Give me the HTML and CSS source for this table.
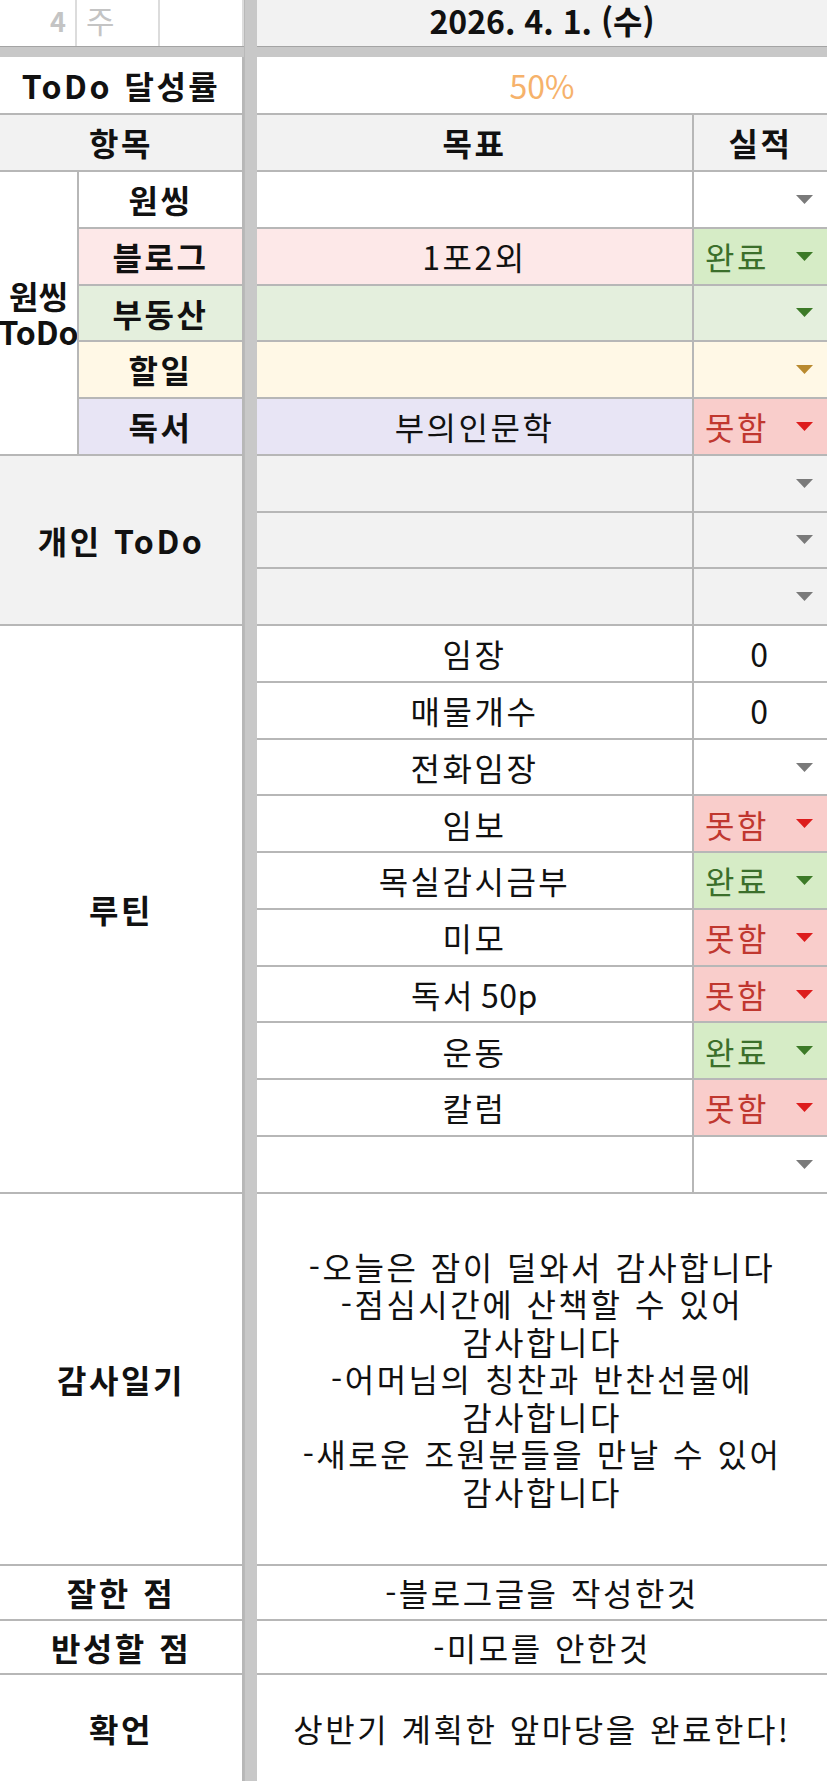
FILE: index.html
```html
<!DOCTYPE html>
<html lang="ko">
<head>
<meta charset="utf-8">
<title>ToDo</title>
<link rel="stylesheet" href="styles.css">
</head>
<body>
<div class="sheet">
  <div class="band"></div>
  <div class="bar"></div>

  <div class="cell cAB toprow topleft">
    <div class="tl-num">4</div>
    <div class="tl-week">주</div>
    <div class="tl-empty"></div>
  </div>
  <div class="cell cTS toprow date">2026. 4. 1. (수)</div>

  <div class="cell cAB b">ToDo 달성률</div>
  <div class="cell cTS rate">50%</div>

  <div class="cell cAB b grey">항목</div>
  <div class="cell cT b grey">목표</div>
  <div class="cell cS b grey">실적</div>

  <div class="cell cA b group r5"><span>원씽</span><span>ToDo</span></div>
  <div class="cell cB b">원씽</div>
  <div class="cell cT"></div>
  <div class="cell cS st"><svg class="tri t-grey" viewBox="0 0 17 9"><polygon points="0,0 17,0 8.5,9"/></svg></div>

  <div class="cell cB b pink">블로그</div>
  <div class="cell cT pink">1포2외</div>
  <div class="cell cS st ok"><span>완료</span><svg class="tri t-green" viewBox="0 0 17 9"><polygon points="0,0 17,0 8.5,9"/></svg></div>

  <div class="cell cB b green">부동산</div>
  <div class="cell cT green"></div>
  <div class="cell cS st green"><svg class="tri t-green" viewBox="0 0 17 9"><polygon points="0,0 17,0 8.5,9"/></svg></div>

  <div class="cell cB b yellow">할일</div>
  <div class="cell cT yellow"></div>
  <div class="cell cS st yellow"><svg class="tri t-yellow" viewBox="0 0 17 9"><polygon points="0,0 17,0 8.5,9"/></svg></div>

  <div class="cell cB b lav">독서</div>
  <div class="cell cT lav">부의인문학</div>
  <div class="cell cS st no"><span>못함</span><svg class="tri t-red" viewBox="0 0 17 9"><polygon points="0,0 17,0 8.5,9"/></svg></div>

  <div class="cell cAB b grey r3">개인 ToDo</div>
  <div class="cell cT grey"></div>
  <div class="cell cS st grey"><svg class="tri t-grey" viewBox="0 0 17 9"><polygon points="0,0 17,0 8.5,9"/></svg></div>
  <div class="cell cT grey"></div>
  <div class="cell cS st grey"><svg class="tri t-grey" viewBox="0 0 17 9"><polygon points="0,0 17,0 8.5,9"/></svg></div>
  <div class="cell cT grey"></div>
  <div class="cell cS st grey"><svg class="tri t-grey" viewBox="0 0 17 9"><polygon points="0,0 17,0 8.5,9"/></svg></div>

  <div class="cell cAB b r10">루틴</div>
  <div class="cell cT">임장</div>
  <div class="cell cS">0</div>
  <div class="cell cT">매물개수</div>
  <div class="cell cS">0</div>
  <div class="cell cT">전화임장</div>
  <div class="cell cS st"><svg class="tri t-grey" viewBox="0 0 17 9"><polygon points="0,0 17,0 8.5,9"/></svg></div>
  <div class="cell cT">임보</div>
  <div class="cell cS st no"><span>못함</span><svg class="tri t-red" viewBox="0 0 17 9"><polygon points="0,0 17,0 8.5,9"/></svg></div>
  <div class="cell cT">목실감시금부</div>
  <div class="cell cS st ok"><span>완료</span><svg class="tri t-green" viewBox="0 0 17 9"><polygon points="0,0 17,0 8.5,9"/></svg></div>
  <div class="cell cT">미모</div>
  <div class="cell cS st no"><span>못함</span><svg class="tri t-red" viewBox="0 0 17 9"><polygon points="0,0 17,0 8.5,9"/></svg></div>
  <div class="cell cT">독서 <span class="lat">50p</span></div>
  <div class="cell cS st no"><span>못함</span><svg class="tri t-red" viewBox="0 0 17 9"><polygon points="0,0 17,0 8.5,9"/></svg></div>
  <div class="cell cT">운동</div>
  <div class="cell cS st ok"><span>완료</span><svg class="tri t-green" viewBox="0 0 17 9"><polygon points="0,0 17,0 8.5,9"/></svg></div>
  <div class="cell cT">칼럼</div>
  <div class="cell cS st no"><span>못함</span><svg class="tri t-red" viewBox="0 0 17 9"><polygon points="0,0 17,0 8.5,9"/></svg></div>
  <div class="cell cT"></div>
  <div class="cell cS st"><svg class="tri t-grey" viewBox="0 0 17 9"><polygon points="0,0 17,0 8.5,9"/></svg></div>

  <div class="cell cAB b">감사일기</div>
  <div class="cell cTS multi">-오늘은 잠이 덜와서 감사합니다<br>-점심시간에 산책할 수 있어<br>감사합니다<br>-어머님의 칭찬과 반찬선물에<br>감사합니다<br>-새로운 조원분들을 만날 수 있어<br>감사합니다</div>

  <div class="cell cAB b">잘한 점</div>
  <div class="cell cTS">-블로그글을 작성한것</div>

  <div class="cell cAB b">반성할 점</div>
  <div class="cell cTS">-미모를 안한것</div>

  <div class="cell cAB b">확언</div>
  <div class="cell cTS">상반기 계획한 앞마당을 완료한다!</div>
</div>
</body>
</html>
```

FILE: styles.css
```css
* {
  box-sizing: border-box;
  margin: 0;
  padding: 0;
}

html,
body {
  background: #ffffff;
}

body {
  width: 827px;
  height: 1781px;
  overflow: hidden;
  font-family: "Noto Sans CJK KR", "Noto Sans", sans-serif;
  font-size: 32px;
  color: #111111;
  letter-spacing: 2.5px;
  word-spacing: 1px;
}

.sheet {
  display: grid;
  grid-template-columns: 79px 165px 13px 437px 133px;
  grid-template-rows: 46px 11px 58px 57px repeat(18, 56.78px) 372px 55px 54px 108px;
}

.cell {
  display: flex;
  align-items: center;
  justify-content: center;
  border-right: 2px solid #b7b7b7;
  border-bottom: 2px solid #b7b7b7;
  overflow: hidden;
  white-space: nowrap;
  line-height: 1.2;
  background: #ffffff;
}

.cA { grid-column: 1; }
.cB { grid-column: 2; }
.cAB { grid-column: 1 / 3; }
.cT { grid-column: 4; }
.cS { grid-column: 5; border-right: none; }
.cTS { grid-column: 4 / 6; border-right: none; }

.r3 { grid-row: span 3; }
.r5 { grid-row: span 5; }
.r10 { grid-row: span 10; }

.band {
  grid-column: 1 / -1;
  grid-row: 2;
  background: #c8c8c8;
  border-top: 1px solid #a4a4a4;
}

.bar {
  grid-column: 3;
  grid-row: 1 / -1;
  background: #c8c8c8;
  border-left: 1px solid #b9b9b9;
}

.b { font-weight: 700; }

.lat {
  letter-spacing: 0.5px;
  margin-left: 6px;
}

.toprow { border-bottom: none; }

.topleft {
  justify-content: flex-start;
  align-items: stretch;
  border-right: 2px solid #dcdcdc;
  letter-spacing: 0;
}

.tl-num {
  width: 77px;
  border-right: 2px solid #dcdcdc;
  display: flex;
  align-items: center;
  justify-content: flex-end;
  padding: 0 9px 4px 0;
  color: #c4c4c4;
  font-size: 27px;
  font-weight: 700;
}

.tl-week {
  width: 83px;
  border-right: 2px solid #dcdcdc;
  display: flex;
  align-items: center;
  padding: 0 0 6px 9px;
  color: #c4c4c4;
  font-size: 31px;
}

.tl-empty { flex: 1; }

.date {
  background: #f2f2f2;
  font-weight: 700;
  padding-bottom: 6px;
  letter-spacing: 0;
  word-spacing: 0;
}

.rate {
  color: #f6b26b;
  letter-spacing: 0;
}

.grey { background: #f2f2f2; }
.pink { background: #fde8e8; }
.green { background: #e4efdd; }
.yellow { background: #fff8e6; }
.lav { background: #e8e5f5; }

.group {
  flex-direction: column;
  line-height: 36px;
  letter-spacing: 0;
}

.st {
  justify-content: flex-start;
  padding: 0 14px 0 11px;
}

.st .tri {
  width: 17px;
  height: 9px;
  margin-left: auto;
  flex: none;
}

.ok { background: #d6ecc6; color: #3b6f2b; }
.no { background: #f9cdcb; color: #c0372f; }

.t-grey { fill: #7a7a7a; }
.t-green { fill: #3c7a27; }
.t-yellow { fill: #b98a2f; }
.t-red { fill: #dd1c1c; }

.multi {
  text-align: center;
  line-height: 37.5px;
}
```
